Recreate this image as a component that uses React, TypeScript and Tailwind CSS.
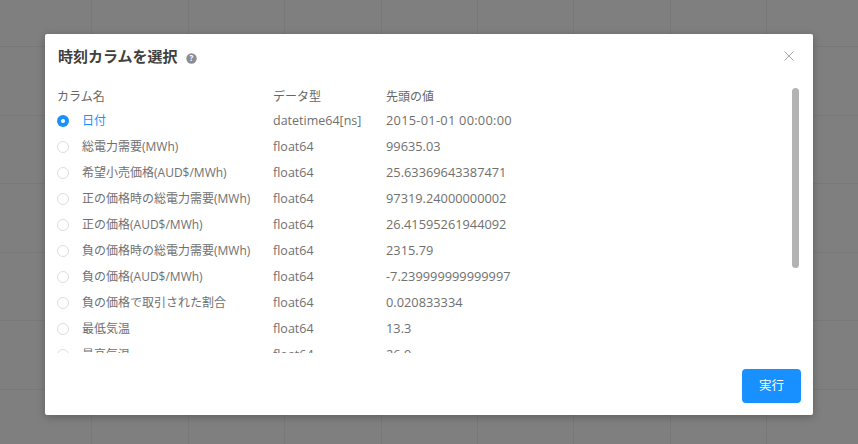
const rows = [
  { name: "日付", type: "datetime64[ns]", value: "2015-01-01 00:00:00", checked: true },
  { name: "総電力需要(MWh)", type: "float64", value: "99635.03" },
  { name: "希望小売価格(AUD$/MWh)", type: "float64", value: "25.63369643387471" },
  { name: "正の価格時の総電力需要(MWh)", type: "float64", value: "97319.24000000002" },
  { name: "正の価格(AUD$/MWh)", type: "float64", value: "26.41595261944092" },
  { name: "負の価格時の総電力需要(MWh)", type: "float64", value: "2315.79" },
  { name: "負の価格(AUD$/MWh)", type: "float64", value: "-7.239999999999997" },
  { name: "負の価格で取引された割合", type: "float64", value: "0.020833334" },
  { name: "最低気温", type: "float64", value: "13.3" },
  { name: "最高気温", type: "float64", value: "26.9" },
];

const font = "font-['Open_Sans','Noto_Sans_CJK_JP',sans-serif]";

export default function App() {
  return (
    <div className={`relative h-[444px] w-[858px] overflow-hidden bg-[#7f7f7f] ${font}`}>
      {/* page behind the overlay */}
      <div className="absolute inset-0 grid grid-cols-[repeat(9,96.4px)] grid-rows-[47px_repeat(6,68.6px)] -translate-x-1">
        {Array.from({ length: 63 }).map((_, i) => (
          <div key={i} className="border-r border-b border-[#787878]" />
        ))}
      </div>

      <div className="relative flex h-full items-start justify-center pt-[34px]">
        <div className="flex h-[381px] w-[768px] flex-col rounded-[2px] bg-white shadow-[0_2px_8px_rgba(0,0,0,0.25)]">
          <div className="flex h-[44px] shrink-0 items-center justify-between pl-[13px] pr-[19px]">
            <div className="flex items-center gap-[8px]">
              <span className="text-[15px] font-bold leading-5 text-[#404040]">時刻カラムを選択</span>
              <svg width="11" height="11" viewBox="0 0 11 11" className="mt-[5px]">
                <circle cx="5.5" cy="5.5" r="5.2" fill="#8c8c94" />
                <text x="5.5" y="8.3" textAnchor="middle" fontSize="8" fontWeight="700" fill="#fff">?</text>
              </svg>
            </div>
            <svg width="10" height="10" viewBox="0 0 10 10" stroke="#a6a6a6" strokeWidth="1">
              <path d="M0.5 0.5L9.5 9.5M9.5 0.5L0.5 9.5" />
            </svg>
          </div>

          <div className="relative min-h-0 flex-1 overflow-hidden pl-[12px] pr-[12px]">
            <div className="grid h-[30px] grid-cols-[216px_113px_1fr] items-center pt-[8px] text-[12px] text-[#666666]">
              <span>カラム名</span>
              <span>データ型</span>
              <span>先頭の値</span>
            </div>
            <div className="h-[245px] overflow-hidden">
              {rows.map((row) => (
                <div
                  key={row.name}
                  className={`grid h-[26px] grid-cols-[216px_113px_1fr] items-center text-[12px] ${
                    row.checked ? "text-[#1890ff]" : "text-[#707070]"
                  }`}
                >
                  <div className="flex items-center gap-[13px]">
                    <span
                      className={`flex h-3 w-3 items-center justify-center rounded-full ${
                        row.checked ? "bg-[#1890ff]" : "border border-[#dcdce4]"
                      }`}
                    >
                      {row.checked && <span className="h-1 w-1 rounded-full bg-white" />}
                    </span>
                    <span className="whitespace-nowrap">{row.name}</span>
                  </div>
                  <span className="text-[12.5px] text-[#707070]">{row.type}</span>
                  <span className={`text-[12.8px] text-[#707070] ${row.checked ? "tracking-[0.27px]" : ""}`}>
                    {row.value}
                  </span>
                </div>
              ))}
            </div>
            {/* scrollbar thumb */}
            <div className="absolute right-[14px] top-[10px] h-[180px] w-[7px] rounded-full bg-[#b3b3b3]" />
          </div>

          <div className="flex h-[60px] shrink-0 items-start justify-end pr-[12px] pt-[14px]">
            <button className="h-[34px] w-[59px] rounded-[4px] bg-[#1890ff] text-[12.5px] text-white">実行</button>
          </div>
        </div>
      </div>
    </div>
  );
}
